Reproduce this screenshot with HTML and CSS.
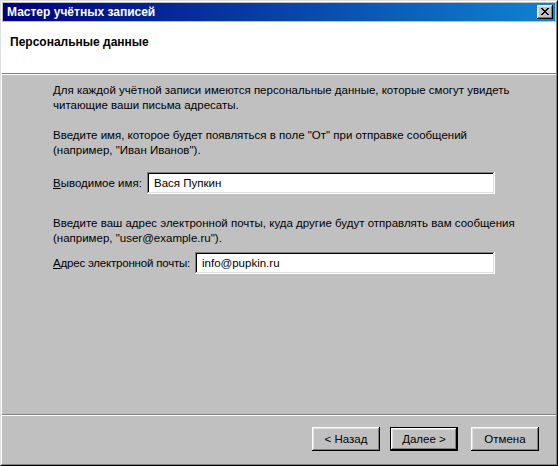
FILE: index.html
```
<!DOCTYPE html>
<html lang="ru">
<head>
<meta charset="utf-8">
<title>Мастер учётных записей</title>
<link rel="stylesheet" href="styles.css">
</head>
<body>
<div class="window">
  <div class="frame">
    <div class="titlebar">
      <span class="title">Мастер учётных записей</span>
      <span class="close">
        <svg width="8" height="7" viewBox="0 0 8 7"><path d="M0 0h2v1h1v1h2V1h1V0h2v1H7v1H6v1H5v1h1v1h1v1h1v1H6V6H5V5H3v1H2v1H0V6h1V5h1V4h1V3H2V2H1V1H0z" fill="#000"/></svg>
      </span>
    </div>
    <div class="header">
      <div class="heading">Персональные данные</div>
    </div>
    <div class="content">
      <p class="text p1">Для каждой учётной записи имеются персональные данные, которые смогут увидеть<br>читающие ваши письма адресаты.</p>
      <p class="text p2">Введите имя, которое будет появляться в поле "От" при отправке сообщений<br>(например, "Иван Иванов").</p>
      <div class="row r1">
        <label class="label lbl1"><u>В</u>ыводимое имя:</label>
        <div class="field f1">Вася Пупкин</div>
      </div>
      <p class="text p3">Введите ваш адрес электронной почты, куда другие будут отправлять вам сообщения<br>(например, "user@example.ru").</p>
      <div class="row r2">
        <label class="label lbl2"><u>А</u>дрес электронной почты:</label>
        <div class="field f2">info@pupkin.ru</div>
      </div>
    </div>
    <div class="footer">
      <span class="btn back">&lt; Назад</span>
      <span class="btn next default">Далее &gt;</span>
      <span class="btn cancel">Отмена</span>
    </div>
  </div>
</div>
</body>
</html>
```
FILE: styles.css
```
html, body {
  margin: 0;
  padding: 0;
  background: #c0c0c0;
}
.window {
  width: 558px;
  height: 466px;
  box-sizing: border-box;
  border-top: 1px solid #dfdfdf;
  border-left: 1px solid #dfdfdf;
  border-right: 1px solid #000;
  border-bottom: 1px solid #000;
  background: #c0c0c0;
  font-family: "Liberation Sans", Arial, sans-serif;
  font-size: 11.5px;
  color: #000;
}
.frame {
  height: 100%;
  box-sizing: border-box;
  border-top: 1px solid #fff;
  border-left: 1px solid #fff;
  border-right: 1px solid #808080;
  border-bottom: 1px solid #808080;
  padding: 1px;
  display: flex;
  flex-direction: column;
}
.titlebar {
  height: 18px;
  flex: none;
  background: linear-gradient(to right, #000080, #1084d0);
  display: flex;
  align-items: center;
  justify-content: space-between;
  padding: 0 2px 0 4px;
  margin-bottom: 1px;
}
.title {
  color: #fff;
  font-weight: bold;
  font-size: 12px;
}
.close {
  width: 16px;
  height: 14px;
  box-sizing: border-box;
  background: #c0c0c0;
  box-shadow: inset -1px -1px #000, inset 1px 1px #fff, inset -2px -2px #808080, inset 2px 2px #dfdfdf;
  display: flex;
  align-items: center;
  justify-content: center;
  padding: 0 1px 1px 0;
}
.close svg { display: block; }
.header {
  height: 52px;
  flex: none;
  background: #fff;
  margin: 0 -1px;
  border-bottom: 1px solid #808080;
  box-shadow: 0 1px 0 #fff;
  box-sizing: border-box;
  padding: 13px 0 0 8px;
}
.heading {
  font-weight: bold;
  font-size: 12px;
  line-height: 14px;
}
.content {
  flex: 1;
  padding: 9px 0 0 51px;
  border-bottom: 1px solid #808080;
  box-shadow: 0 1px 0 #fff;
  margin: 0 -1px;
}
.text {
  margin: 0;
  line-height: 15px;
}
.p2 { margin-top: 15px; }
.p3 { margin-top: 22px; }
.row {
  display: flex;
  align-items: center;
}
.r1 { margin-top: 14px; }
.r2 { margin-top: 6px; }
.label { flex: none; white-space: nowrap; }
.lbl1 { width: 94px; }
.lbl2 { width: 142px; letter-spacing: -0.2px; }
.label u { text-decoration: underline; text-underline-offset: 1px; }
.field {
  flex: none;
  height: 22px;
  box-sizing: border-box;
  background: #fff;
  box-shadow: inset -1px -1px #fff, inset 1px 1px #808080, inset -2px -2px #dfdfdf, inset 2px 2px #000;
  padding: 0 4px 0 7px;
  line-height: 22px;
}
.f1 { width: 348px; }
.f2 { width: 300px; }
.footer {
  height: 47px;
  flex: none;
  margin-top: 1px;
  display: flex;
  align-items: flex-start;
  padding: 11px 0 0 309px;
  box-sizing: border-box;
}
.btn {
  width: 68px;
  height: 24px;
  box-sizing: border-box;
  display: flex;
  align-items: center;
  justify-content: center;
  background: #c0c0c0;
  box-shadow: inset -1px -1px #000, inset 1px 1px #fff, inset -2px -2px #808080, inset 2px 2px #dfdfdf;
  font-size: 11.5px;
}
.next { margin-left: 10px; }
.cancel { margin-left: 13px; }
.default {
  border: 1px solid #000;
  box-shadow: inset -1px -1px #000, inset 1px 1px #fff, inset -2px -2px #808080, inset 2px 2px #dfdfdf;
}
```
